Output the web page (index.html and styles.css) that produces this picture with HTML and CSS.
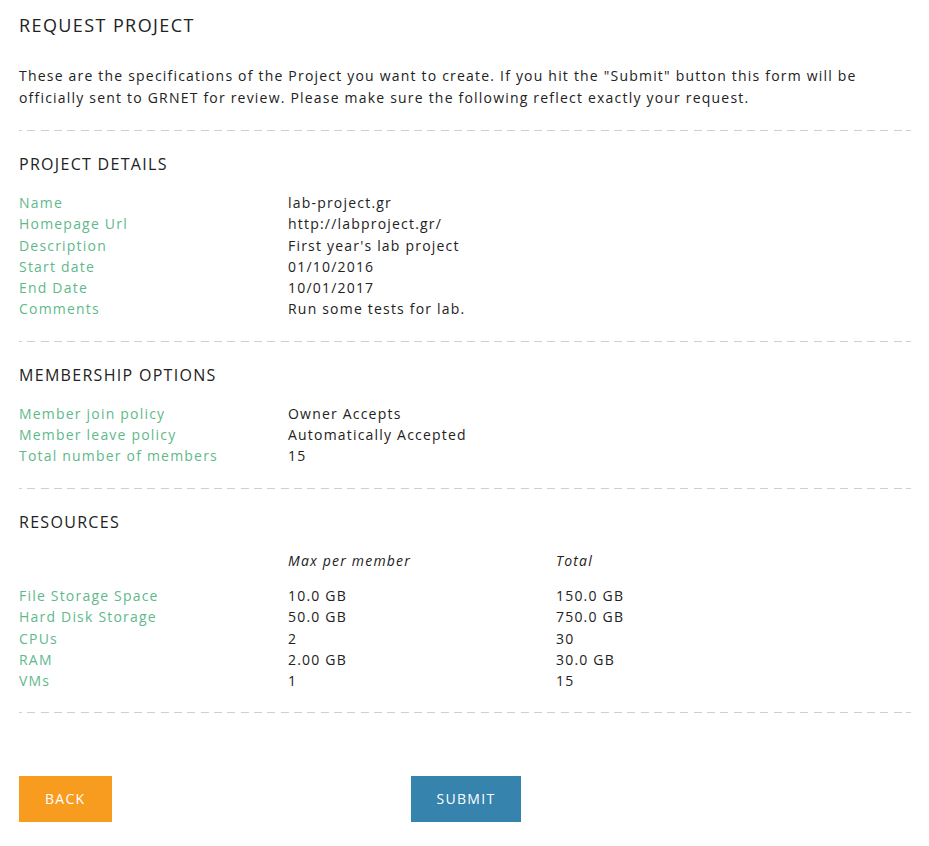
FILE: index.html
```html
<!DOCTYPE html>
<html>
<head>
<meta charset="utf-8">
<title>Request Project</title>
<link rel="stylesheet" href="styles.css">
</head>
<body>
<div class="page">
  <h1 class="title">REQUEST PROJECT</h1>
  <p class="intro">These are the specifications of the Project you want to create. If you hit the "Submit" button this form will be officially sent to GRNET for review. Please make sure the following reflect exactly your request.</p>
  <div class="sep"></div>

  <section class="block">
    <h2 class="heading">PROJECT DETAILS</h2>
    <div class="grid">
      <div class="lbl">Name</div><div class="val">lab-project.gr</div><div></div>
      <div class="lbl">Homepage Url</div><div class="val">http://labproject.gr/</div><div></div>
      <div class="lbl">Description</div><div class="val">First year's lab project</div><div></div>
      <div class="lbl">Start date</div><div class="val">01/10/2016</div><div></div>
      <div class="lbl">End Date</div><div class="val">10/01/2017</div><div></div>
      <div class="lbl">Comments</div><div class="val">Run some tests for lab.</div><div></div>
    </div>
  </section>
  <div class="sep"></div>

  <section class="block">
    <h2 class="heading">MEMBERSHIP OPTIONS</h2>
    <div class="grid">
      <div class="lbl">Member join policy</div><div class="val">Owner Accepts</div><div></div>
      <div class="lbl">Member leave policy</div><div class="val">Automatically Accepted</div><div></div>
      <div class="lbl">Total number of members</div><div class="val">15</div><div></div>
    </div>
  </section>
  <div class="sep"></div>

  <section class="block">
    <h2 class="heading">RESOURCES</h2>
    <div class="grid head-row">
      <div></div><div class="colhead">Max per member</div><div class="colhead">Total</div>
    </div>
    <div class="grid">
      <div class="lbl">File Storage Space</div><div class="val">10.0 GB</div><div class="val">150.0 GB</div>
      <div class="lbl">Hard Disk Storage</div><div class="val">50.0 GB</div><div class="val">750.0 GB</div>
      <div class="lbl">CPUs</div><div class="val">2</div><div class="val">30</div>
      <div class="lbl">RAM</div><div class="val">2.00 GB</div><div class="val">30.0 GB</div>
      <div class="lbl">VMs</div><div class="val">1</div><div class="val">15</div>
    </div>
  </section>
  <div class="sep"></div>

  <div class="actions">
    <a class="btn btn-back" href="#">BACK</a>
    <a class="btn btn-submit" href="#">SUBMIT</a>
  </div>
</div>
</body>
</html>
```

FILE: styles.css
```css
html, body {
  margin: 0;
  padding: 0;
  background: #ffffff;
}

body {
  font-family: "Open Sans", "Liberation Sans", sans-serif;
  font-size: 14px;
  color: #222222;
  letter-spacing: 1.2px;
}

.page {
  width: 892px;
  padding: 12px 18px 0 19px;
}

.title {
  margin: 0;
  font-size: 18px;
  font-weight: 400;
  line-height: 26px;
  letter-spacing: 1.4px;
}

.intro {
  margin: 27px 0 0 0;
  line-height: 22px;
}

.sep {
  height: 1px;
  margin: 21px 0 0 0;
  background-image: repeating-linear-gradient(to right, #cfcfcf 0, #cfcfcf 8px, transparent 8px, transparent 13.33px);
  background-position: -5px 0;
}

.block {
  padding-top: 22px;
}

.heading {
  margin: 0 0 17px 0;
  font-size: 16px;
  font-weight: 400;
  line-height: 22px;
  letter-spacing: 1.3px;
}

.grid {
  display: grid;
  grid-template-columns: 269px 268px 1fr;
  line-height: 21.3px;
}

.lbl {
  color: #5fb98b;
}

.head-row {
  margin-bottom: 14px;
}

.colhead {
  font-style: italic;
}

.actions {
  display: flex;
  gap: 299px;
  margin-top: 63px;
}

.btn {
  display: inline-block;
  height: 46px;
  line-height: 46px;
  padding: 0 26px;
  color: #ffffff;
  text-decoration: none;
  font-size: 14px;
  letter-spacing: 1.3px;
}

.btn-back {
  background: #f89c1f;
}

.btn-submit {
  background: #3683ad;
}
```
